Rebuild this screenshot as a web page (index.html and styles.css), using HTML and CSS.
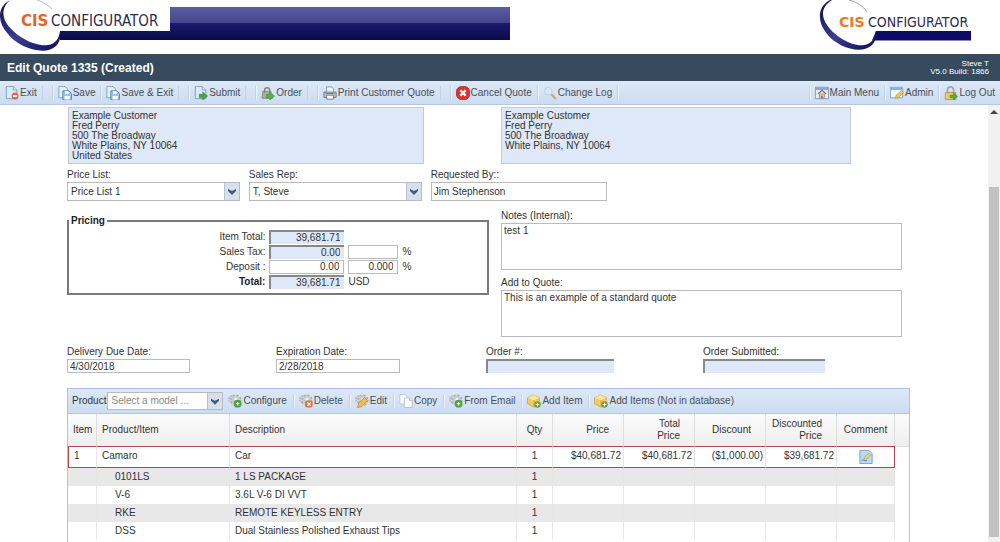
FILE: index.html
```html
<!DOCTYPE html>
<html lang="en">
<head>
<meta charset="UTF-8">
<meta name="viewport" content="width=device-width, initial-scale=1.0">
<title>Edit Quote 1335</title>
<link rel="stylesheet" href="styles.css">
</head>
<body>
<svg class="defs" aria-hidden="true">
    <defs>
        <linearGradient id="swoosh" x1="0" y1="0" x2="1" y2="1">
            <stop offset="0" stop-color="#10104a"/>
            <stop offset="0.5" stop-color="#3c3c94"/>
            <stop offset="1" stop-color="#0c0c58"/>
        </linearGradient>
        <symbol id="i-page" viewBox="0 0 16 16">
            <path d="M1.5 .5h8l4 4v10h-12z" fill="#d9eafa" stroke="#6f9cca"/>
            <path d="M9.5 .5v4h4" fill="#fff" stroke="#6f9cca"/>
        </symbol>
        <symbol id="i-exit" viewBox="0 0 16 16">
            <use href="#i-page"/>
            <circle cx="11.5" cy="11.5" r="4" fill="#d9694a"/>
            <path d="M9 11.5h5" stroke="#fff" stroke-width="2"/>
        </symbol>
        <symbol id="i-save" viewBox="0 0 16 16">
            <path d="M1 .5h7l3 3v10H1z" fill="#e6f1fc" stroke="#6f9cca"/>
            <path d="M5.5 5.500h7l3 3v7h-10z" fill="#9cc3ea" stroke="#4f83bb"/>
            <path d="M8 6h4v3H8zM7.500 11.500h6v4h-6z" fill="#fff"/>
        </symbol>
        <symbol id="i-submit" viewBox="0 0 16 16">
            <use href="#i-page"/>
            <path d="M6 9.500h4V7l5.500 4.500L10 16v-2.500H6z" fill="#46a53c" stroke="#2f7f2a" stroke-width=".6"/>
        </symbol>
        <symbol id="i-order" viewBox="0 0 16 16">
            <path d="M2 6h9l2 8H1z" fill="#a9b39a" stroke="#7f8872"/>
            <path d="M4 8V5a3 3 0 0 1 6 0v3" fill="none" stroke="#7f8872" stroke-width="1.500"/>
            <path d="M6 9.500h4V7l5.500 4.500L10 16v-2.500H6z" fill="#5cb044" stroke="#3b8731" stroke-width=".6"/>
        </symbol>
        <symbol id="i-print" viewBox="0 0 16 16">
            <path d="M4 7V1h6l2 2v4" fill="#e8f1fb" stroke="#7d93ad"/>
            <path d="M1 7h14v6H1z" fill="#bcc3ca" stroke="#6c7680"/>
            <path d="M4 10.500h8v4.500H4z" fill="#fff" stroke="#6c7680"/>
            <path d="M3 8.500h10" stroke="#6c7680"/>
        </symbol>
        <symbol id="i-cancel" viewBox="0 0 16 16">
            <rect x=".5" y=".5" width="15" height="15" rx="6" fill="#dc3530" stroke="#c22722"/>
            <path d="M5 5l6 6M11 5l-6 6" stroke="#fff" stroke-width="2.500"/>
        </symbol>
        <symbol id="i-log" viewBox="0 0 16 16">
            <path d="M9.500 9.500l4.500 4.500" stroke="#d6a06c" stroke-width="2.500" stroke-linecap="round"/>
            <circle cx="6" cy="6" r="4.500" fill="#d4e8fa" stroke="#b4cfe9"/>
        </symbol>
        <symbol id="i-menu" viewBox="0 0 16 16">
            <path d="M.5 1.500h15v13H.5z" fill="#e3edf6" stroke="#7696b6"/>
            <path d="M1 2h14v2.500H1z" fill="#84abd1"/>
            <path d="M3.500 9L8 5l4.500 4" fill="none" stroke="#b05a48" stroke-width="1.500"/>
            <path d="M5 9h6v5H5z" fill="#d6c5b3" stroke="#8c8178" stroke-width=".7"/>
            <path d="M7.200 11h1.600v3H7.200z" fill="#76685e"/>
        </symbol>
        <symbol id="i-admin" viewBox="0 0 16 16">
            <path d="M.5 1.500h14v12H.5z" fill="#f7fbff" stroke="#6f9cca"/>
            <path d="M1 2h13v2.500H1z" fill="#7fb0e0"/>
            <path d="M6 14l1-3.500L13 5l2.500 2.500-6 6z" fill="#f0c64d" stroke="#b98d2e" stroke-width=".7"/>
        </symbol>
        <symbol id="i-lock" viewBox="0 0 16 16">
            <path d="M4 8V4.500a3.500 3.500 0 0 1 7 0V8" fill="none" stroke="#a6a69a" stroke-width="2"/>
            <path d="M1.500 7.500h12v8h-12z" fill="#eccb5c" stroke="#b5963d"/>
            <path d="M7 10.500h4V8l4.500 4-4.500 4v-2.500H7z" fill="#5aac3a" stroke="#35802a" stroke-width=".6"/>
        </symbol>
        <symbol id="i-gears" viewBox="0 0 16 16">
            <circle cx="4.500" cy="6" r="3.500" fill="#dfe1e3" stroke="#b4b8bb" stroke-width="2" stroke-dasharray="1.800 1"/>
            <circle cx="9" cy="7" r="5.500" fill="#d0d3d5" stroke="#a6abaf" stroke-width="2" stroke-dasharray="2.400 1.900"/>
            <circle cx="9" cy="7" r="5" fill="#c8cccf"/>
            <circle cx="9" cy="6" r="1.600" fill="#f1f4f7"/>
        </symbol>
        <symbol id="i-configure" viewBox="0 0 16 16">
            <use href="#i-gears"/>
            <circle cx="11" cy="11" r="4.500" fill="#4fa245"/>
            <path d="M9 11h4M11 9v4" stroke="#d8f2d2" stroke-width="1.500"/>
        </symbol>
        <symbol id="i-delete" viewBox="0 0 16 16">
            <use href="#i-gears"/>
            <rect x="7" y="7.500" width="8.500" height="8" rx="2" fill="#dd7340"/>
            <path d="M9.500 9.500l4 4M13.500 9.500l-4 4" stroke="#fff" stroke-width="1.400"/>
        </symbol>
        <symbol id="i-edit" viewBox="0 0 16 16">
            <use href="#i-gears"/>
            <path d="M3 15.500l1-4.500 7-7 3.500 3.500-7 7z" fill="#f0bf4c" stroke="#b57d2a" stroke-width=".8"/>
        </symbol>
        <symbol id="i-copy" viewBox="0 0 16 16">
            <path d="M1 .5h6l2.500 2.500v8.500H1z" fill="#fff" stroke="#b3c3d4"/>
            <path d="M6 4.500h6l3 3v8H6z" fill="#fff" stroke="#a9bbcd"/>
            <path d="M12 4.500v3h3" fill="none" stroke="#a9bbcd"/>
        </symbol>
        <symbol id="i-box" viewBox="0 0 16 16">
            <path d="M.5 4.500L7 1l7 3v7l-6 4-7.500-4z" fill="#f2cb61" stroke="#c59b3b" stroke-width=".8"/>
            <path d="M1 4.500L8 7l6-3-7-3z" fill="#fbe7a4"/>
            <path d="M8 7v8" stroke="#c59b3b" stroke-width=".8"/>
            <circle cx="12" cy="12" r="3.700" fill="#6f9c3d"/>
            <path d="M12 10v4M10 12h4" stroke="#fff" stroke-width="1.300"/>
        </symbol>
        <symbol id="i-note" viewBox="0 0 16 16">
            <path d="M1 .5h10.500l3.500 3.500v11.500H1z" fill="#b9daf3" stroke="#6b9ec8"/>
            <path d="M3 12c2-2 3 1.500 6 0" fill="none" stroke="#4e7da6"/>
            <path d="M5.500 10.500l1-2.500 5-4.500 2 2-5 5z" fill="#f2ce67" stroke="#b5913a" stroke-width=".6"/>
        </symbol>
    </defs>
</svg>

<header class="header">
    <div class="banner">
        <svg class="logo" width="170" height="54" viewBox="0 0 170 54" role="img" aria-label="CIS Configurator">
            <path d="M0 0h170v31H60v10l-12 13H0z" fill="#fff"/>
            <path d="M10 0C-3 7-3 22 8 34c12 15 38 22 48 12 4-4 5-9 4-15-1 8-5 13-12 14-12 2-32-8-41-21C1 15 3 6 10 0z" fill="url(#swoosh)"/>
            <path d="M37 0c6 2 11 5 15 9" fill="none" stroke="#b9b9c6"/>
            <text class="logo-cis" x="21" y="26">CIS</text>
            <text class="logo-name" x="51" y="26">CONFIGURATOR</text>
        </svg>
    </div>
    <svg class="logo" width="182" height="54" viewBox="0 0 182 54" role="img" aria-label="CIS Configurator">
        <path d="M58 31h95v9.500H54z" fill="#0c0c66"/>
        <path d="M12 0C-1 7-1 22 9 34c11 14 35 21 45 11 4-4 5-9 4-14-1 8-5 13-12 14-11 2-29-8-37-20C3 16 3 7 14 0z" fill="url(#swoosh)"/>
        <path d="M31 0c8 2 14 6 18 12" fill="none" stroke="#9a9aac"/>
        <text class="logo-cis small" x="21" y="27">CIS</text>
        <text class="logo-name small" x="50" y="27">CONFIGURATOR</text>
    </svg>
</header>

<div class="titlebar">
    <h1>Edit Quote 1335 (Created)</h1>
    <div class="version">Steve T<br>V5.0 Build: 1866</div>
</div>

<nav class="toolbar">
    <button class="tool"><svg class="icon"><use href="#i-exit"/></svg>Exit</button>
    <span class="sep wide"></span>
    <button class="tool"><svg class="icon"><use href="#i-save"/></svg>Save</button>
    <span class="sep"></span>
    <button class="tool"><svg class="icon"><use href="#i-save"/></svg>Save &amp; Exit</button>
    <span class="sep wide"></span>
    <button class="tool"><svg class="icon"><use href="#i-submit"/></svg>Submit</button>
    <span class="sep wide"></span>
    <button class="tool"><svg class="icon"><use href="#i-order"/></svg>Order</button>
    <span class="sep wide"></span>
    <button class="tool"><svg class="icon"><use href="#i-print"/></svg>Print Customer Quote</button>
    <span class="sep wide"></span>
    <button class="tool"><svg class="icon"><use href="#i-cancel"/></svg>Cancel Quote</button>
    <span class="sep"></span>
    <button class="tool"><svg class="icon"><use href="#i-log"/></svg>Change Log</button>
    <span class="sep"></span>
    <span class="spacer"></span>
    <span class="sep"></span>
    <button class="tool"><svg class="icon"><use href="#i-menu"/></svg>Main Menu</button>
    <span class="sep"></span>
    <button class="tool"><svg class="icon"><use href="#i-admin"/></svg>Admin</button>
    <span class="sep"></span>
    <button class="tool"><svg class="icon"><use href="#i-lock"/></svg>Log Out</button>
</nav>

<div class="page">
    <main class="content">
        <div class="addresses">
            <div class="address">Example Customer<br>Fred Perry<br>500 The Broadway<br>White Plains, NY 10064<br>United States</div>
            <div class="address">Example Customer<br>Fred Perry<br>500 The Broadway<br>White Plains, NY 10064</div>
        </div>

        <div class="people">
            <div class="field">
                <label for="price-list">Price List:</label>
                <select id="price-list"><option>Price List 1</option></select>
            </div>
            <div class="field">
                <label for="sales-rep">Sales Rep:</label>
                <select id="sales-rep"><option>T, Steve</option></select>
            </div>
            <div class="field">
                <label for="requested-by">Requested By::</label>
                <input type="text" id="requested-by" value="Jim Stephenson">
            </div>
        </div>

        <div class="details">
            <fieldset class="pricing">
                <legend>Pricing</legend>
                <div class="price-row">
                    <label for="item-total">Item Total:</label>
                    <input type="text" id="item-total" class="locked" value="39,681.71" readonly>
                </div>
                <div class="price-row">
                    <label for="sales-tax">Sales Tax:</label>
                    <input type="text" id="sales-tax" class="locked" value="0.00" readonly>
                    <input type="text" class="percent" aria-label="Sales tax percent">
                    <span>%</span>
                </div>
                <div class="price-row">
                    <label for="deposit">Deposit :</label>
                    <input type="text" id="deposit" value="0.00">
                    <input type="text" class="percent" aria-label="Deposit percent" value="0.000">
                    <span>%</span>
                </div>
                <div class="price-row">
                    <label for="total" class="bold">Total:</label>
                    <input type="text" id="total" class="locked" value="39,681.71" readonly>
                    <span>USD</span>
                </div>
            </fieldset>
            <div class="notes">
                <label for="notes">Notes (Internal):</label>
                <textarea id="notes">test 1</textarea>
                <label for="add-quote">Add to Quote:</label>
                <textarea id="add-quote">This is an example of a standard quote</textarea>
            </div>
        </div>

        <div class="dates">
            <div class="field">
                <label for="due">Delivery Due Date:</label>
                <input type="text" id="due" value="4/30/2018">
            </div>
            <div class="field">
                <label for="expires">Expiration Date:</label>
                <input type="text" id="expires" value="2/28/2018">
            </div>
            <div class="field">
                <label for="order-no">Order #:</label>
                <input type="text" id="order-no" class="locked" readonly>
            </div>
            <div class="field">
                <label for="submitted">Order Submitted:</label>
                <input type="text" id="submitted" class="locked" readonly>
            </div>
        </div>

        <section class="products">
            <div class="toolbar grid-toolbar">
                <label for="model">Product</label>
                <select id="model"><option>Select a model ...</option></select>
                <button class="tool"><svg class="icon"><use href="#i-configure"/></svg>Configure</button>
                <span class="sep"></span>
                <button class="tool"><svg class="icon"><use href="#i-delete"/></svg>Delete</button>
                <span class="sep"></span>
                <button class="tool"><svg class="icon"><use href="#i-edit"/></svg>Edit</button>
                <span class="sep"></span>
                <button class="tool"><svg class="icon"><use href="#i-copy"/></svg>Copy</button>
                <span class="sep"></span>
                <button class="tool"><svg class="icon"><use href="#i-configure"/></svg>From Email</button>
                <span class="sep"></span>
                <button class="tool"><svg class="icon"><use href="#i-box"/></svg>Add Item</button>
                <span class="sep"></span>
                <button class="tool"><svg class="icon"><use href="#i-box"/></svg>Add Items (Not in database)</button>
            </div>
            <table>
                <colgroup>
                    <col class="c-item"><col class="c-product"><col><col class="c-qty">
                    <col class="c-money"><col class="c-money"><col class="c-money"><col class="c-money">
                    <col class="c-comment"><col class="c-end">
                </colgroup>
                <thead>
                    <tr>
                        <th>Item</th>
                        <th>Product/Item</th>
                        <th>Description</th>
                        <th class="center">Qty</th>
                        <th class="money">Price</th>
                        <th class="money">Total<br>Price</th>
                        <th class="money">Discount</th>
                        <th class="money">Discounted<br>Price</th>
                        <th class="center">Comment</th>
                        <th></th>
                    </tr>
                </thead>
                <tbody>
                    <tr class="selected">
                        <td>1</td><td>Camaro</td><td>Car</td><td class="center">1</td>
                        <td class="money">$40,681.72</td><td class="money">$40,681.72</td>
                        <td class="money">($1,000.00)</td><td class="money">$39,681.72</td>
                        <td class="center"><button class="note" aria-label="Edit comment"><svg class="icon"><use href="#i-note"/></svg></button></td>
                        <td></td>
                    </tr>
                    <tr class="option alt">
                        <td></td><td>0101LS</td><td>1 LS PACKAGE</td><td class="center">1</td>
                        <td></td><td></td><td></td><td></td><td></td><td></td>
                    </tr>
                    <tr class="option">
                        <td></td><td>V-6</td><td>3.6L V-6 DI VVT</td><td class="center">1</td>
                        <td></td><td></td><td></td><td></td><td></td><td></td>
                    </tr>
                    <tr class="option alt">
                        <td></td><td>RKE</td><td>REMOTE KEYLESS ENTRY</td><td class="center">1</td>
                        <td></td><td></td><td></td><td></td><td></td><td></td>
                    </tr>
                    <tr class="option">
                        <td></td><td>DSS</td><td>Dual Stainless Polished Exhaust Tips</td><td class="center">1</td>
                        <td></td><td></td><td></td><td></td><td></td><td></td>
                    </tr>
                </tbody>
            </table>
        </section>
    </main>
    <div class="scrollbar" aria-hidden="true">
        <span class="arrow"></span>
        <span class="thumb"></span>
    </div>
</div>
</body>
</html>
```

FILE: styles.css
```css
* {
    box-sizing: border-box;
}

body {
    margin: 0;
    height: 100vh;
    display: flex;
    flex-direction: column;
    overflow: hidden;
    background-color: #fff;
    color: #333;
    font-family: "Liberation Sans", Arial, sans-serif;
    font-size: 10px;
    line-height: 12px;
}

button, input, select, textarea {
    font: inherit;
    color: inherit;
    margin: 0;
    border-radius: 0;
}

.defs {
    position: absolute;
    width: 0;
    height: 0;
}

/* header */
.header {
    display: flex;
    justify-content: space-between;
    height: 54px;
    flex: none;
}

.banner {
    width: 51%;
    background: linear-gradient(#5c5ca0, #45458f 50%, #1a1a70 50%, #0a0a48) 0 7px / 100% 33px no-repeat;
}

.logo {
    display: block;
}

.logo-cis {
    font: bold 15px "DejaVu Sans", sans-serif;
    fill: #e0662a;
}

.logo-name {
    font: 15px "DejaVu Sans Condensed", "DejaVu Sans", sans-serif;
    fill: #2c2c50;
}

.logo-cis.small {
    font-size: 14px;
    fill: #ee7a1e;
}

.logo-name.small {
    font-size: 14px;
}

.titlebar {
    display: flex;
    justify-content: space-between;
    align-items: center;
    flex: none;
    height: 27px;
    padding: 0 11px 0 7px;
    background-color: #364c5e;
    color: #fff;
}

.titlebar h1 {
    margin: 0;
    font-size: 12px;
}

.version {
    font-size: 8px;
    line-height: 8px;
    text-align: right;
}

/* toolbars */
.toolbar {
    display: flex;
    align-items: center;
    flex: none;
    height: 24px;
    border-bottom: 1px solid #b4c8e2;
    background: linear-gradient(#dce8f7, #cddcf1);
}

.tool {
    display: flex;
    align-items: center;
    gap: 1px;
    padding: 0 5px;
    border: none;
    background: none;
    color: #4a4f58;
    white-space: nowrap;
    cursor: pointer;
}

.icon {
    width: 14px;
    height: 14px;
    flex: none;
}

.sep {
    width: 1px;
    height: 14px;
    background-color: #c5d3e6;
    box-shadow: 1px 0 #edf4fd;
}

.sep.wide {
    width: 11px;
    border: solid #c5d3e6;
    border-width: 0 1px;
    background: none;
}

.spacer {
    flex: 1;
}

/* scrolling page */
.page {
    display: flex;
    flex: 1;
    min-height: 0;
}

.content {
    flex: 1;
    overflow: hidden;
    padding: 2px 78px 0 67px;
}

.scrollbar {
    display: flex;
    flex-direction: column;
    align-items: center;
    width: 12px;
    padding: 5px 1px;
    background-color: #f1f1f1;
}

.arrow {
    border: 4px solid transparent;
    border-top: none;
    border-bottom: 4px solid #444;
    margin-bottom: 73px;
}

.thumb {
    flex: 1;
    width: 100%;
    background-color: #c1c1c1;
}

input, select, textarea {
    border: 1px solid #bbb;
    background-color: #fff;
    padding: 0 2px;
    outline: none;
}

select {
    appearance: none;
    height: 19px;
    padding: 0 18px 0 3px;
    background: url("data:image/svg+xml,%3Csvg xmlns='http://www.w3.org/2000/svg' width='15' height='17'%3E%3Crect width='15' height='17' fill='%23d5e0ec'/%3E%3Cpath d='M.5 0v17' stroke='%23b5c3d3'/%3E%3Cpath d='M4 6l4 2 4-2v2l-4 4-4-4z' fill='%23445b7c'/%3E%3C/svg%3E") right center no-repeat #fff;
}

.locked {
    border: solid #888;
    border-width: 2px 0 0 2px;
    background-color: #dfe8f8;
}

.addresses {
    display: grid;
    grid-template-columns: 356fr 350fr;
    gap: 77px;
    padding-right: 59px;
    margin-left: 1px;
}

.address {
    height: 57px;
    padding: 3px;
    border: 1px solid #c3c9d3;
    background-color: #dfe8f8;
    line-height: 10px;
    white-space: nowrap;
}

.people {
    display: grid;
    grid-template-columns: 174fr 174fr 177fr;
    gap: 9px;
    width: 64%;
    margin-top: 5px;
}

.field {
    display: flex;
    flex-direction: column;
    gap: 1px;
}

.people input {
    height: 19px;
}

.details {
    display: grid;
    grid-template-columns: 422fr 401fr;
    gap: 12px;
    align-items: start;
    padding-right: 8px;
    margin-top: 9px;
}

.pricing {
    margin: 5px 0 0;
    padding: 2px 0 4px;
    border: 2px solid #7a7a7a;
}

.pricing legend {
    padding: 0 2px;
    color: #222;
    font-weight: bold;
}

.price-row {
    display: grid;
    grid-template-columns: 47% 75px 50px auto;
    column-gap: 4px;
    align-items: center;
    height: 15px;
}

.price-row label {
    text-align: right;
}

.price-row input {
    width: 100%;
    height: 14px;
    padding: 0 4px;
    text-align: right;
}

.bold {
    color: #222;
    font-weight: bold;
}

.notes {
    display: flex;
    flex-direction: column;
    gap: 1px;
}

.notes textarea {
    height: 47px;
    margin-bottom: 6px;
    padding-top: 1px;
    resize: none;
}

.dates {
    display: grid;
    grid-template-columns: 209fr 210fr 217fr 207fr;
    margin-top: 3px;
}

.dates input {
    width: 59%;
    height: 14px;
}

/* product grid */
.products {
    min-height: 160px;
    margin-top: 15px;
    border: 1px solid #a9c4e6;
}

.grid-toolbar {
    height: 25px;
    padding-left: 4px;
}

.grid-toolbar select {
    width: 116px;
    height: 18px;
    margin-left: 1px;
    color: #888;
}

.grid-toolbar .tool {
    padding: 0 6px 0 5px;
}

table {
    width: 100%;
    table-layout: fixed;
    border-collapse: separate;
    border-spacing: 0;
}

.c-item {
    width: 29px;
}

.c-product {
    width: 133px;
}

.c-qty {
    width: 36px;
}

.c-money {
    width: 71px;
}

.c-comment {
    width: 58px;
}

.c-end {
    width: 14px;
}

th {
    height: 32px;
    padding: 0 5px;
    border-right: 1px solid #ddd;
    background: linear-gradient(#fbfbfb, #eee);
    font-weight: normal;
    text-align: left;
}

th:last-child {
    border-right: none;
}

th.money {
    padding-right: 14px;
}

td {
    height: 18px;
    padding: 0 5px;
    border-right: 1px solid #e6e6e6;
    white-space: nowrap;
}

td:last-child {
    border-right: none;
}

.money {
    padding-right: 2px;
    text-align: right;
}

.center {
    padding: 0;
    text-align: center;
}

.selected td {
    height: 22px;
    padding-bottom: 2px;
    border-top: 1px solid #b0474f;
    border-bottom: 1px solid #b0474f;
}

.selected td:first-child {
    border-left: 1px solid #b0474f;
}

.selected td:nth-child(9) {
    padding-bottom: 0;
    border-right: 1px solid #b0474f;
}

.selected td:last-child {
    border-top-color: #ddd;
    border-bottom: none;
}

.option td:nth-child(2) {
    padding-left: 18px;
}

.alt td {
    background-color: #e8e8e8;
}

.alt td:last-child {
    background: none;
}

.note {
    display: block;
    margin: 0 auto;
    padding: 0;
    border: none;
    background: none;
}

.note .icon {
    display: block;
}
```
